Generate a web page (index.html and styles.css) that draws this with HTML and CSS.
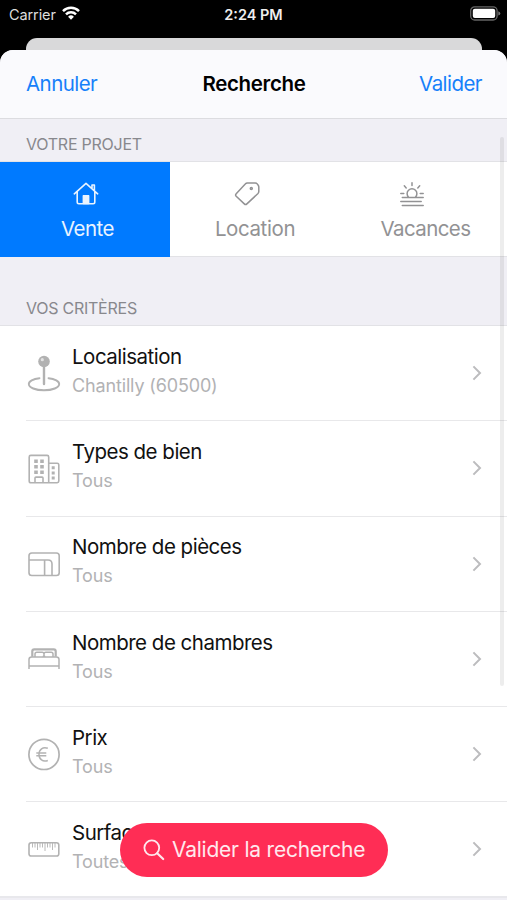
FILE: index.html
```html
<!DOCTYPE html>
<html lang="fr">
<head>
  <meta charset="UTF-8">
  <title>Recherche</title>
  <link rel="stylesheet" href="styles.css">
</head>
<body>
  <div class="phone">
    <div class="status">
      <div class="carrier">
        <span>Carrier</span>
        <svg width="18" height="14" viewBox="0 0 18 14" fill="none" stroke="#fff" stroke-width="2.5">
          <path d="M1 5.1a11.4 11.4 0 0 1 16 0"/>
          <path d="M4 8.3a7.1 7.1 0 0 1 10 0"/>
          <path d="M9 13.7l-2.9-3a4.1 4.1 0 0 1 5.8 0z" fill="#fff" stroke="none"/>
        </svg>
      </div>
      <span class="time">2:24 PM</span>
      <svg class="battery" width="31" height="15" viewBox="0 0 31 15">
        <rect x=".7" y=".8" width="26.4" height="13.2" rx="4" fill="none" stroke="#666" stroke-width="1.3"/>
        <rect x="2.8" y="2.8" width="22.4" height="9.2" rx="2" fill="#fff"/>
        <path d="M28.3 5.2q2 .8 2 2.2t-2 2.2z" fill="#777"/>
      </svg>
    </div>
    <div class="back-sheet"></div>

    <div class="sheet">
      <header class="navbar">
        <a class="nav-link cancel">Annuler</a>
        <h1>Recherche</h1>
        <a class="nav-link ok">Valider</a>
      </header>

      <h2 class="section">VOTRE PROJET</h2>
      <div class="tabs">
        <div class="tab active">
          <svg width="26" height="26" viewBox="0 0 26 26" fill="none" stroke="currentColor" stroke-width="1.6" stroke-linejoin="round" stroke-linecap="round">
            <path d="M1.3 12.8L13 2.3l11.700 10.500M4.200 10.600v10.500q0 1.700 1.700 1.700h14.200q1.700 0 1.700-1.700V10.600M19 7V4h2.400v5.500"/>
            <path d="M10.400 22.500v-7.800h5.200v7.800z" fill="currentColor"/>
          </svg>
          <span>Vente</span>
        </div>
        <div class="tab location">
          <svg width="26" height="26" viewBox="0 0 26 26" fill="none" stroke="currentColor" stroke-width="1.5" stroke-linejoin="round">
            <path d="M13.3 2h7.9q1.3 0 2 .9l1 1.3q.6.8.6 1.8v4.6q0 1.1-.8 1.9L12.9 22.9q-1.3 1.3-2.6 0L2.2 15.2q-1.2-1.200 0-2.500L11.500 2.800Q12.200 2 13.300 2z"/>
            <circle cx="17.3" cy="7.6" r="1"/>
          </svg>
          <span>Location</span>
        </div>
        <div class="tab vacances">
          <svg width="26" height="26" viewBox="0 0 26 26" fill="none" stroke="currentColor" stroke-width="1.5" stroke-linecap="round">
            <path d="M9.600 16.200a4.900 4.900 0 1 1 6.800 0M13 1.800v2.800M5.300 4.800l1.900 2.100M20.700 4.800l-1.900 2.100M1.800 12.600h3M21.200 12.600h3M3.300 16.500h20.900M1.800 20.400h20.400M3.300 24.400h20.900"/>
          </svg>
          <span>Vacances</span>
        </div>
      </div>

      <h2 class="section criteria">VOS CRITÈRES</h2>
      <div class="list">
        <div class="row">
          <svg class="icon" width="34" height="40" viewBox="0 0 34 40" fill="none" stroke="currentColor" stroke-width="1.9">
            <path d="M12.500 25.200C6 25.800 1.800 28.300 1.800 31c0 3.600 6.700 6.300 15.200 6.300S32.200 34.600 32.200 31c0-2.700-4.200-5.200-10.700-5.800" stroke-linecap="round"/>
            <path d="M17 13v18" stroke-width="2.400" stroke-linecap="round"/>
            <circle cx="17" cy="8.500" r="5.800" fill="currentColor" stroke="none"/>
            <circle cx="15.300" cy="6.700" r="1.600" fill="#e2e2e2" stroke="none"/>
          </svg>
          <div class="text"><span class="title">Localisation</span><span class="value">Chantilly (60500)</span></div>
          <svg class="chevron" width="10" height="16" viewBox="0 0 10 16"><path d="M1.400 1.400L8 8l-6.600 6.600"/></svg>
        </div>
        <div class="row">
          <svg class="icon" width="34" height="40" viewBox="0 0 34 40" fill="none" stroke="currentColor" stroke-width="1.600">
            <path d="M21.700 34.700H4q-1.800 0-1.800-1.800V9q0-1.600 1.600-1.600h16.300q1.600 0 1.600 1.600v25.700zM21.700 15.200h8.500q1.600 0 1.600 1.600v16.300q0 1.600-1.600 1.600h-8.500"/>
            <path d="M8 34.700v-4.600q0-1 1-1h6q1 0 1 1v4.600"/>
            <path d="M7.200 13.200h3.600M13.200 13.200h3.600M7.200 18.700h3.600M13.200 18.700h3.600M7.200 24.200h3.600M13.200 24.200h3.600" stroke-width="3.500"/>
            <path d="M24.700 19.800h3M24.700 24.900h3M24.700 30h3" stroke-width="3"/>
          </svg>
          <div class="text"><span class="title">Types de bien</span><span class="value">Tous</span></div>
          <svg class="chevron" width="10" height="16" viewBox="0 0 10 16"><path d="M1.400 1.400L8 8l-6.600 6.600"/></svg>
        </div>
        <div class="row">
          <svg class="icon" width="34" height="40" viewBox="0 0 34 40" fill="none" stroke="currentColor" stroke-width="1.600">
            <rect x="2" y="9" width="30.200" height="22.500" rx="2.800"/>
            <path d="M2 16h19q4 0 4 4v11.500M17.600 16v15.500"/>
          </svg>
          <div class="text"><span class="title">Nombre de pièces</span><span class="value">Tous</span></div>
          <svg class="chevron" width="10" height="16" viewBox="0 0 10 16"><path d="M1.400 1.400L8 8l-6.600 6.600"/></svg>
        </div>
        <div class="row">
          <svg class="icon" width="34" height="40" viewBox="0 0 34 40" fill="none" stroke="currentColor" stroke-width="1.500">
            <path d="M2 30V20.500q0-2.500 2.700-2.500h24.600q2.700 0 2.700 2.500V30M2 27h30"/>
            <path d="M5.300 17.800v-5.500q0-2 2-2h19.400q2 0 2 2v5.500" stroke-width="2.200"/>
            <path d="M8 18v-3q0-1.800 1.800-1.800h5.400Q17 13.200 17 15v1.200q0 1.300-1.300 1.300M26 18v-3q0-1.800-1.800-1.800h-5.400Q17 13.200 17 15v1.200q0 1.300 1.300 1.300"/>
          </svg>
          <div class="text"><span class="title">Nombre de chambres</span><span class="value">Tous</span></div>
          <svg class="chevron" width="10" height="16" viewBox="0 0 10 16"><path d="M1.400 1.400L8 8l-6.600 6.600"/></svg>
        </div>
        <div class="row">
          <svg class="icon" width="34" height="40" viewBox="0 0 34 40" fill="none" stroke="currentColor" stroke-width="1.700">
            <circle cx="17" cy="20.400" r="15.100"/>
            <path d="M20.800 14.300c-5-2-8.800 1.400-8.800 6.100s3.800 8.100 8.800 6.100M9.300 18.900h10M9.300 21.700h10" stroke-width="1.500"/>
          </svg>
          <div class="text"><span class="title">Prix</span><span class="value">Tous</span></div>
          <svg class="chevron" width="10" height="16" viewBox="0 0 10 16"><path d="M1.400 1.400L8 8l-6.600 6.600"/></svg>
        </div>
        <div class="row">
          <svg class="icon" width="34" height="40" viewBox="0 0 34 40" fill="none" stroke="currentColor" stroke-width="1.600">
            <rect x="2" y="13.800" width="29.800" height="13.200" rx="2.300"/>
            <path d="M5.500 14v4.500M8 14v4.500M10.500 14v7M13 14v4.500M15.500 14v4.500M18 14v8M20.500 14v4.500M23 14v4.500M25.500 14v7M28 14v4.500" stroke-width=".9"/>
          </svg>
          <div class="text"><span class="title">Surface</span><span class="value">Toutes</span></div>
          <svg class="chevron" width="10" height="16" viewBox="0 0 10 16"><path d="M1.400 1.400L8 8l-6.600 6.600"/></svg>
        </div>
      </div>
    </div>

    <div class="scrollbar"></div>
    <button class="submit">
      <svg width="22" height="22" viewBox="0 0 22 22" fill="none" stroke="#ffe8ed" stroke-width="1.800" stroke-linecap="round">
        <circle cx="8.800" cy="8.800" r="7.400"/>
        <path d="M14.200 14.200l6 5.800" stroke-width="2.200"/>
      </svg>
      <span>Valider la recherche</span>
    </button>
  </div>
</body>
</html>
```
FILE: styles.css
```css
* {
  box-sizing: border-box;
}

body {
  margin: 0;
  background: #000;
  font-family: Inter, Roboto, sans-serif;
}

.phone {
  position: relative;
  width: 507px;
  height: 900px;
  overflow: hidden;
}

/* status bar */
.status {
  display: grid;
  grid-template-columns: 1fr auto 1fr;
  align-items: center;
  height: 38px;
  padding: 0 6px 10px 9px;
  color: #fff;
  font-size: 15px;
}
.carrier {
  display: flex;
  align-items: center;
  gap: 6px;
  color: #ddd;
  font-size: 14.5px;
  letter-spacing: -.1px;
}
.carrier svg {
  margin-top: -2px;
}
.time {
  margin-right: 3px;
  font-weight: 600;
  font-size: 14.5px;
  color: #eee;
}
.battery {
  justify-self: end;
  margin-top: -1px;
}

.back-sheet {
  height: 12px;
  margin: 0 25px 0 26px;
  border-radius: 11px 11px 0 0;
  background: #d9d9da;
}

/* modal */
.sheet {
  height: 850px;
  border-radius: 13px 13px 0 0;
  background: #f0eff5;
  overflow: hidden;
}
.navbar {
  display: grid;
  grid-template-columns: 1fr auto 1fr;
  align-items: center;
  height: 69px;
  padding: 0 25px 1px 26px;
  background: #fafafd;
  border-bottom: 1px solid #dcdce0;
}
.navbar h1 {
  margin: 0;
  font-size: 20.5px;
  font-weight: 600;
  letter-spacing: -.35px;
}
.nav-link {
  color: #1680fa;
  font-size: 20.5px;
  letter-spacing: -.55px;
}
.ok {
  justify-self: end;
}

.section {
  display: flex;
  align-items: flex-end;
  height: 43px;
  margin: 0;
  padding: 0 26px 7px;
  color: #88888d;
  font-size: 16px;
  font-weight: 400;
  line-height: 20px;
  letter-spacing: -.25px;
  border-bottom: 1px solid #e2e2e6;
}
.criteria {
  height: 69px;
}

.tabs {
  display: grid;
  grid-template-columns: 170px 169px 168px;
  height: 95px;
  background: #fff;
  border-bottom: 1px solid #e2e2e6;
}
.tab {
  display: flex;
  flex-direction: column;
  align-items: center;
  gap: 9px;
  padding: 19px 0 0 5px;
  color: #929294;
  font-size: 20.5px;
  line-height: 26px;
  letter-spacing: -.55px;
}
.active {
  margin-bottom: -1px;
  background: #007aff;
  color: #e8f3ff;
}
.tab svg {
  margin-left: -3px;
}
.location {
  padding-left: 1px;
  letter-spacing: -.4px;
}
.location svg {
  margin-left: -16px;
}
.vacances {
  letter-spacing: -.6px;
}
.vacances svg {
  margin-left: -27px;
}

/* criteria list */
.list {
  padding-left: 26px;
  background: #fff;
}
.row {
  display: flex;
  align-items: center;
  height: 95.3px;
  padding: 0 25px 0 1px;
  border-bottom: 1px solid #e8e8ea;
}
.row:last-child {
  margin-left: -26px;
  padding-left: 27px;
  border-bottom: 2px solid #e8e8ec;
}
.icon {
  flex: none;
  color: #b2b2b2;
}
.text {
  display: flex;
  flex: 1;
  flex-direction: column;
  gap: 3px;
  margin-left: 11px;
  padding-bottom: 4px;
}
.title {
  color: #111;
  font-size: 20.5px;
  line-height: 26px;
  letter-spacing: -.5px;
}
.value {
  color: #b2b2b4;
  font-size: 18px;
  line-height: 26px;
  letter-spacing: -.15px;
}
.chevron {
  fill: none;
  stroke: #bcbcbe;
  stroke-width: 2;
}

.scrollbar {
  position: absolute;
  top: 137px;
  right: 3px;
  width: 4px;
  height: 549px;
  border-radius: 2px;
  background: rgba(0, 0, 0, .07);
}

.submit {
  position: absolute;
  left: 120px;
  bottom: 23px;
  display: flex;
  align-items: center;
  gap: 7px;
  width: 268px;
  height: 54px;
  padding: 0 0 1px 23px;
  border: 0;
  border-radius: 27px;
  background: #ff2d55;
  color: #ffe8ed;
  font-family: inherit;
  font-size: 21px;
  letter-spacing: -.23px;
  white-space: nowrap;
}
```
